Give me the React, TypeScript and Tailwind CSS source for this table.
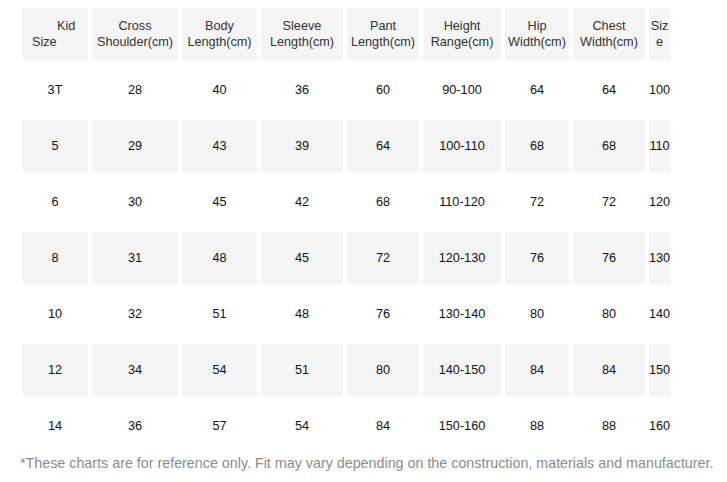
const headers: string[][] = [
  ["Cross", "Shoulder(cm)"],
  ["Body", "Length(cm)"],
  ["Sleeve", "Length(cm)"],
  ["Pant", "Length(cm)"],
  ["Height", "Range(cm)"],
  ["Hip", "Width(cm)"],
  ["Chest", "Width(cm)"],
];

const rows: string[][] = [
  ["3T", "28", "40", "36", "60", "90-100", "64", "64", "100"],
  ["5", "29", "43", "39", "64", "100-110", "68", "68", "110"],
  ["6", "30", "45", "42", "68", "110-120", "72", "72", "120"],
  ["8", "31", "48", "45", "72", "120-130", "76", "76", "130"],
  ["10", "32", "51", "48", "76", "130-140", "80", "80", "140"],
  ["12", "34", "54", "51", "80", "140-150", "84", "84", "150"],
  ["14", "36", "57", "54", "84", "150-160", "88", "88", "160"],
];

export default function App() {
  return (
    <div
      className="w-[727px] h-[482px] bg-white pt-[8px] pl-[22px] overflow-hidden"
      style={{ fontFamily: '"Liberation Sans", Arial, sans-serif' }}
    >
      <div className="grid grid-cols-[66px_86px_75px_82px_72px_78px_64px_72px_21px] gap-x-1 gap-y-1 auto-rows-[52px] text-[12.7px] leading-[16px]">
        {/* header */}
        <div className="bg-[#f5f5f5] flex flex-col justify-center pl-[10px] text-[#333]">
          <span className="pl-[25px]">Kid</span>
          <span>Size</span>
        </div>
        {headers.map((h) => (
          <div
            key={h[1] + h[0]}
            className="bg-[#f5f5f5] flex flex-col items-center justify-center text-center text-[#333]"
          >
            <span>{h[0]}</span>
            <span>{h[1]}</span>
          </div>
        ))}
        <div className="bg-[#f5f5f5] flex items-center justify-center text-center text-[#333] break-all">
          Size
        </div>

        {rows.map((r, i) =>
          r.map((v, j) => (
            <div
              key={i + "-" + j}
              className={`flex items-center justify-center text-[#111] whitespace-nowrap ${
                i % 2 === 1 ? "bg-[#f5f5f5]" : "bg-white"
              }`}
            >
              {v}
            </div>
          ))
        )}
      </div>
      <p className="mt-[3px] -ml-[2px] text-[14.3px] leading-[16px] text-[#8c8c8c] whitespace-nowrap">
        *These charts are for reference only. Fit may vary depending on the construction, materials and manufacturer.
      </p>
    </div>
  );
}
